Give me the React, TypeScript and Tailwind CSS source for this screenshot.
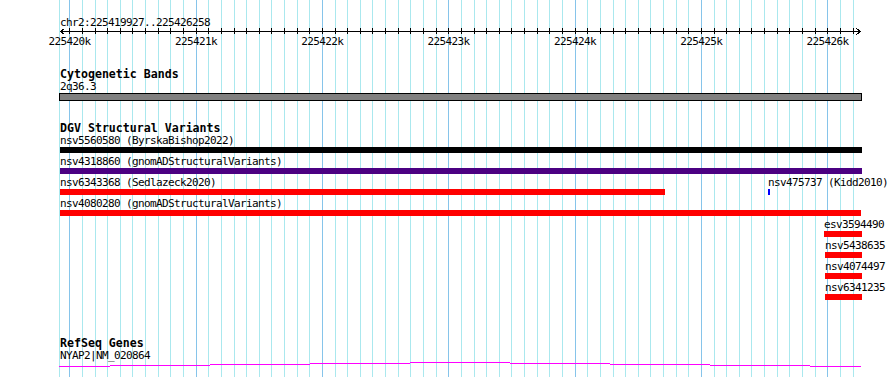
import React from "react";

const MONO = "font-['DejaVu_Sans_Mono',monospace]";
const SMALL = "text-[11px] leading-[13px] tracking-[-0.62px] whitespace-nowrap text-black";
const TITLE = "text-[11.6px] leading-[12px] font-bold whitespace-nowrap text-black";

const minorLines = Array.from({ length: 63 }, (_, k) => ({
  x: Math.round(69.3 + k * 12.633),
  major: k % 10 === 0,
}));

const labels = [0, 10, 20, 30, 40, 50, 60].map((k, i) => ({
  x: 69.3 + k * 12.633,
  text: `${225420 + i}k`,
}));

type Feat = { label: string; left: number; width: number; color: string };

const dgvRows: Feat[][] = [
  [{ label: "nsv5560580 (ByrskaBishop2022)", left: 0, width: 802, color: "#000000" }],
  [{ label: "nsv4318860 (gnomADStructuralVariants)", left: 0, width: 802, color: "#4b0082" }],
  [
    { label: "nsv6343368 (Sedlazeck2020)", left: 0, width: 605, color: "#ff0000" },
    { label: "nsv475737 (Kidd2010)", left: 708, width: 2, color: "#0000ff" },
  ],
  [{ label: "nsv4080280 (gnomADStructuralVariants)", left: 0, width: 801, color: "#ff0000" }],
  [{ label: "esv3594490", left: 764, width: 38, color: "#ff0000" }],
  [{ label: "nsv5438635", left: 765, width: 37, color: "#ff0000" }],
  [{ label: "nsv4074497", left: 765, width: 37, color: "#ff0000" }],
  [{ label: "nsv6341235", left: 765, width: 37, color: "#ff0000" }],
];

const geneSteps = [
  [59, 110, 366],
  [110, 210, 365],
  [210, 310, 364],
  [310, 410, 363],
  [410, 510, 362],
  [510, 610, 363],
  [610, 710, 364],
  [710, 810, 365],
  [810, 861, 366],
];

export default function App() {
  return (
    <div className={`relative w-[890px] h-[377px] overflow-hidden bg-white ${MONO}`}>
      {/* grid */}
      <div className="absolute inset-0">
        <div className="absolute top-0 bottom-0 w-px bg-[#aae8ee]" style={{ left: 59 }} />
        {minorLines.map((l, i) => (
          <div
            key={i}
            className={`absolute top-0 bottom-0 w-px ${l.major ? "bg-[#86c4ea]" : "bg-[#aae8ee]"}`}
            style={{ left: l.x }}
          />
        ))}
      </div>

      <div className="relative">
        {/* header / ruler */}
        <div className="relative h-[50px]">
          <div className={`pl-[60px] pt-[16px] ${SMALL}`}>chr2:225419927..225426258</div>
          <svg className="absolute left-0 top-[25px]" width={890} height={12} shapeRendering="crispEdges">
            <line x1={60} y1={6.5} x2={861} y2={6.5} stroke="#000" strokeWidth={1} />
            {minorLines.map((l, i) => (
              <line key={i} x1={l.x + 0.5} y1={3} x2={l.x + 0.5} y2={9} stroke="#000" strokeWidth={1} />
            ))}
            <polyline points="64.5,3.5 60.5,6.5 64.5,9.5" fill="none" stroke="#000" strokeWidth={1} />
            <polyline points="856.5,3.5 860.5,6.5 856.5,9.5" fill="none" stroke="#000" strokeWidth={1} />
          </svg>
          {labels.map((l) => (
            <span
              key={l.text}
              className={`absolute top-[35px] -translate-x-1/2 ${SMALL}`}
              style={{ left: l.x + 0.3 }}
            >
              {l.text}
            </span>
          ))}
        </div>

        {/* Cytogenetic Bands */}
        <div className="pl-[60px] pt-[18px]">
          <div className={TITLE}>Cytogenetic Bands</div>
          <div className={SMALL}>2q36.3</div>
          <div className="-ml-px w-[803px] h-[8px] border border-black bg-[#808080]" />
        </div>

        {/* DGV Structural Variants */}
        <div className="pl-[60px] pt-[21px]">
          <div className={TITLE}>DGV Structural Variants</div>
          <div className="flex flex-col">
            {dgvRows.map((row, ri) => (
              <div key={ri} className="relative h-[21px] w-[802px]">
                {row.map((f) => (
                  <div key={f.label} className="absolute top-0 flex flex-col" style={{ left: f.left }}>
                    <div className={SMALL}>{f.label}</div>
                    <div className="h-[6px]" style={{ width: f.width, backgroundColor: f.color }} />
                  </div>
                ))}
              </div>
            ))}
          </div>
        </div>

        {/* RefSeq Genes */}
        <div className="pl-[60px] pt-[35px]">
          <div className={TITLE}>RefSeq Genes</div>
          <div className={SMALL}>NYAP2|NM_020864</div>
        </div>
        <svg className="block" width={890} height={6} viewBox="0 362 890 6" shapeRendering="crispEdges">
          {geneSteps.map(([a, b, y], i) => (
            <rect key={i} x={a} y={y} width={b - a} height={1} fill="#ff00ff" />
          ))}
        </svg>
      </div>
    </div>
  );
}
